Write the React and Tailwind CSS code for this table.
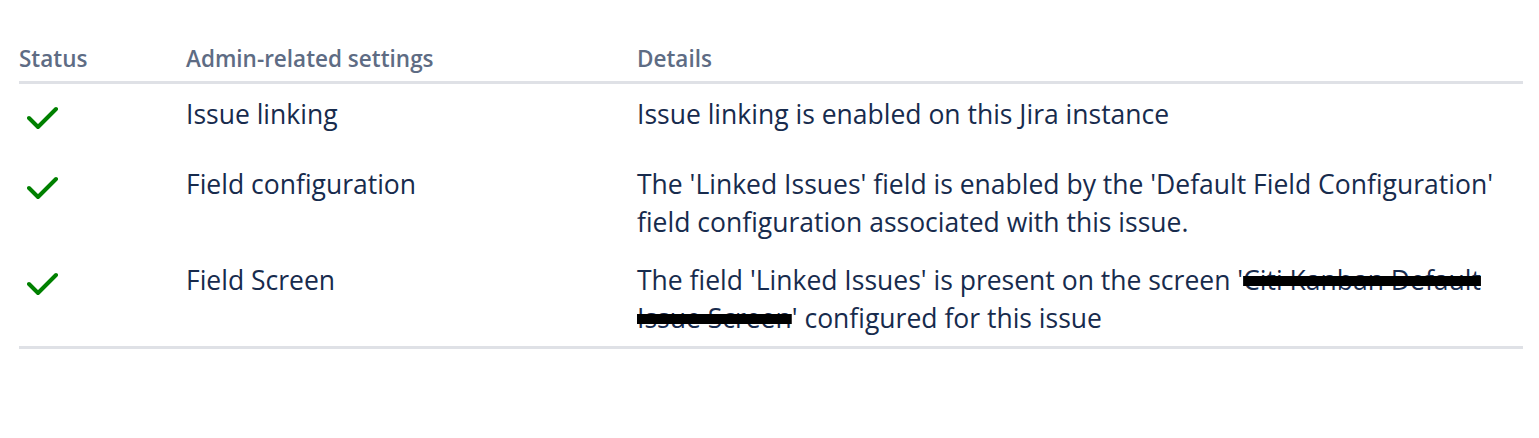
const rows = [
  {
    setting: "Issue linking",
    details: ["Issue linking is enabled on this Jira instance"],
  },
  {
    setting: "Field configuration",
    details: [
      "The 'Linked Issues' field is enabled by the 'Default Field Configuration'",
      "field configuration associated with this issue.",
    ],
  },
];

function Check() {
  return (
    <svg width="32" height="24" viewBox="0 0 32 24" fill="none">
      <polyline
        points="2,12 11,21 29,3"
        stroke="#008000"
        strokeWidth="4"
        strokeLinecap="round"
        strokeLinejoin="round"
      />
    </svg>
  );
}

function Row({ setting, children }) {
  return (
    <div className="grid grid-cols-[167px_451px_1fr] min-h-[70px]">
      <div className="pt-[22px] pl-[8px]">
        <Check />
      </div>
      <div className="pt-[11px] pb-[9px]">{setting}</div>
      <div className="pt-[11px] pb-[9px]">{children}</div>
    </div>
  );
}

export default function App() {
  return (
    <div className="bg-white min-h-screen pt-[45px] pl-[19px] pr-[16px] font-['Open_Sans',sans-serif]">
      <div className="grid grid-cols-[167px_451px_1fr] pb-[8px] border-b-[3px] border-[#dfe1e6] text-[22.5px] leading-[28px] font-semibold text-[#5e6c84]">
        <div>Status</div>
        <div>Admin-related settings</div>
        <div>Details</div>
      </div>
      <div className="border-b-[3px] border-[#dfe1e6] text-[26.5px] leading-[38px] text-[#172b4d]">
        {rows.map((r) => (
          <Row key={r.setting} setting={r.setting}>
            {r.details.map((line) => (
              <div key={line} className="whitespace-nowrap">{line}</div>
            ))}
          </Row>
        ))}
        <Row setting="Field Screen">
          <div className="whitespace-nowrap">
            The field 'Linked Issues' is present on the screen '
            <span className="line-through decoration-black decoration-[10px]">
              Citi Kanban Default
            </span>
          </div>
          <div className="whitespace-nowrap">
            <span className="line-through decoration-black decoration-[10px]">
              Issue Screen
            </span>
            ' configured for this issue
          </div>
        </Row>
      </div>
    </div>
  );
}
